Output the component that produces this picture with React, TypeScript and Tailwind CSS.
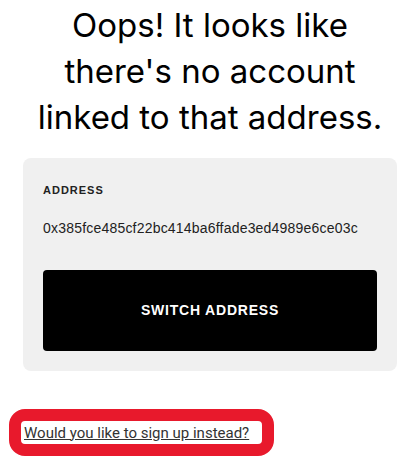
export default function App() {
  return (
    <div className="w-[406px] h-[461px] bg-white overflow-hidden font-['Inter',sans-serif]">
      <div className="pl-[23px] w-[397px] pt-[2px]">
        <h1 className="text-center text-[33px] leading-[46px] font-normal text-black">
          Oops! It looks like<br />there's no account<br />linked to that address.
        </h1>
        <div className="mt-[18px] bg-[#f0f0f0] rounded-[8px] px-[20px] pt-[26px] pb-[20px] font-['Liberation_Sans',Arial,sans-serif]">
          <div className="text-[11px] font-bold tracking-[1px] text-[#222] leading-[12px]">ADDRESS</div>
          <div className="mt-[24px] text-[14px] leading-[16px] text-[#222] tracking-[0.2px]">
            0x385fce485cf22bc414ba6ffade3ed4989e6ce03c
          </div>
          <button className="mt-[34px] w-full h-[81px] bg-black rounded-[4px] text-white text-[14px] font-bold tracking-[0.8px] flex items-center justify-center">
            SWITCH ADDRESS
          </button>
        </div>
      </div>
      <div className="mt-[38px] ml-[9px] inline-flex border-[12px] border-[#e8192c] rounded-[16px] bg-white pl-[3px] pr-[13px] h-[47px] items-center">
        <a href="#" className="text-[15px] text-[#333] underline leading-[18px] font-['Roboto',sans-serif]">
          Would you like to sign up instead?
        </a>
      </div>
    </div>
  );
}
